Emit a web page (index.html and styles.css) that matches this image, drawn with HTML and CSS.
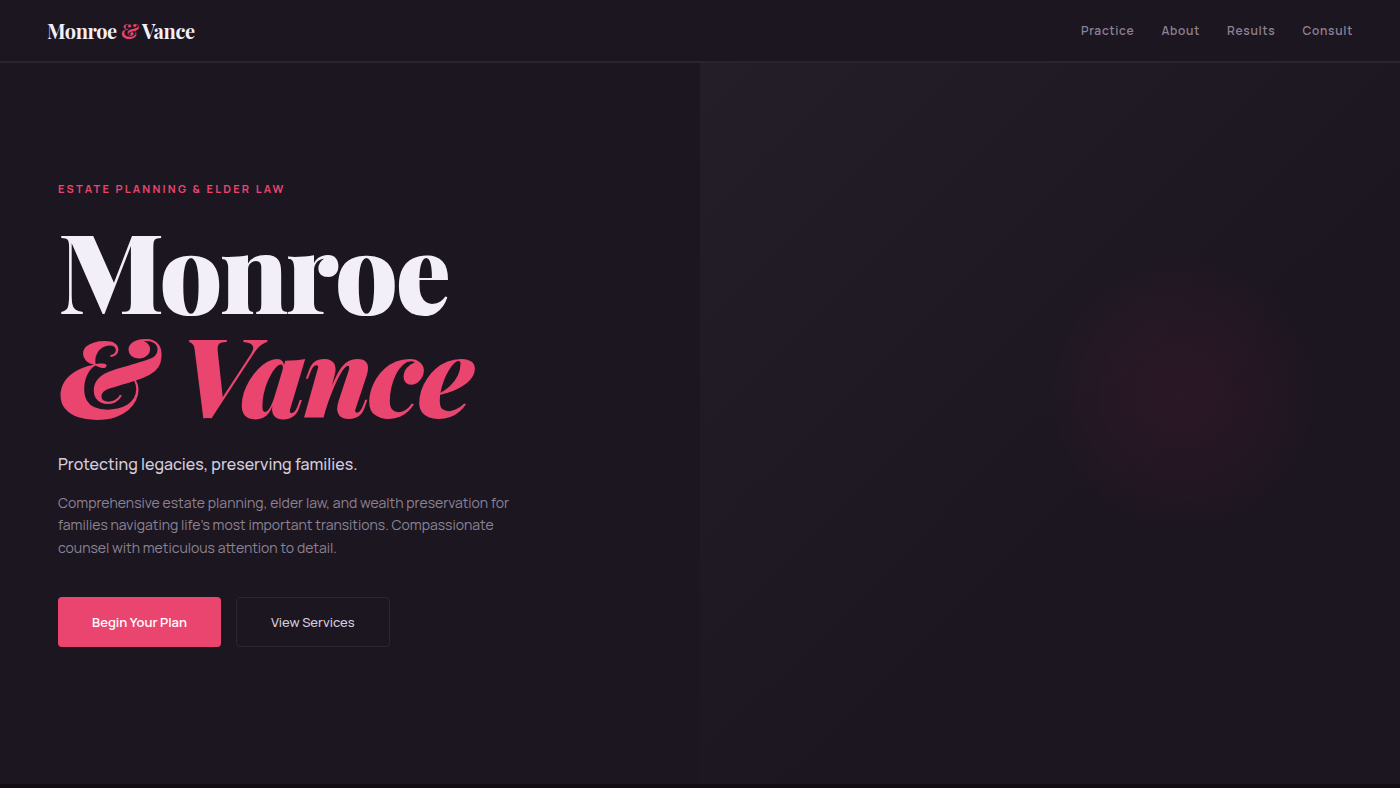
FILE: index.html
```html
<!DOCTYPE html>
<html lang="en">
  <head>
    <meta charset="UTF-8">
    <meta name="viewport" content="width=device-width, initial-scale=1.0">
    <title>Monroe &amp; Vance</title>
    <link rel="stylesheet" href="styles.css">
  </head>
  <body>
    <nav class="navbar">
      <a href="#" class="logo">Monroe <span>&amp;</span> Vance</a>
      <div class="nav-links">
        <a href="#practice">Practice</a>
        <a href="#about">About</a>
        <a href="#results">Results</a>
        <a href="#consult">Consult</a>
      </div>
    </nav>

    <main class="hero">
      <div class="hero-content">
        <p class="eyebrow">Estate Planning &amp; Elder Law</p>
        <h1>Monroe <em>&amp; Vance</em></h1>
        <p class="tagline">Protecting legacies, preserving families.</p>
        <p class="description">Comprehensive estate planning, elder law, and wealth preservation for families navigating life’s most important transitions. Compassionate counsel with meticulous attention to detail.</p>
        <div class="actions">
          <button type="button" class="btn btn-primary">Begin Your Plan</button>
          <button type="button" class="btn btn-outline">View Services</button>
        </div>
      </div>
      <div class="hero-visual"></div>
    </main>
  </body>
</html>
```

FILE: styles.css
```css
* {
  box-sizing: border-box;
}

body {
  display: flex;
  flex-direction: column;
  min-height: 100vh;
  margin: 0;
  font-family: Manrope, Inter, sans-serif;
  color: #f3eff9;
  background-color: #1c1620;
  border-bottom: 4px solid #120c14;
}

/* Navigation */
.navbar {
  display: flex;
  align-items: center;
  justify-content: space-between;
  padding: 18px 47px;
  border-bottom: 2px solid #2a242e;
}

.logo {
  font-family: "Playfair Display", "Liberation Serif", serif;
  font-size: 20px;
  font-weight: 700;
  line-height: 25px;
  letter-spacing: -0.02em;
  color: #f3eff9;
  text-decoration: none;
}

.logo span {
  color: #ea456f;
}

.nav-links {
  display: flex;
  gap: 27px;
}

.nav-links a {
  font-size: 12px;
  font-weight: 600;
  line-height: 24px;
  letter-spacing: 0.06em;
  color: #8c8294;
  text-decoration: none;
}

/* Hero */
.hero {
  display: grid;
  grid-template-columns: 1fr 1fr;
  flex: 1;
}

.hero-content {
  display: flex;
  flex-direction: column;
  justify-content: center;
  padding: 48px 58px 69px;
}

.eyebrow {
  margin: 0 0 18px;
  font-size: 11px;
  font-weight: 700;
  line-height: 20px;
  letter-spacing: 0.2em;
  text-transform: uppercase;
  color: #ea456f;
}

h1 {
  margin: 0 0 27px;
  font-family: "Playfair Display", "Liberation Serif", serif;
  font-size: 110px;
  font-weight: 900;
  line-height: 104px;
  letter-spacing: -0.025em;
}

h1 em {
  display: block;
  font-family: "Playfair Display Black", "Playfair Display", "Liberation Serif", serif;
  font-style: oblique 14deg;
  color: #ea456f;
}

.tagline {
  margin: 0 0 16px;
  font-size: 16px;
  font-weight: 500;
  line-height: 24px;
  color: #d4ccdc;
}

.description {
  max-width: 464px;
  margin: 0 0 38px;
  font-size: 14px;
  line-height: 1.6;
  color: #8c8294;
}

.actions {
  display: flex;
  gap: 15px;
}

.btn {
  height: 50px;
  padding: 0 34px;
  font-family: inherit;
  font-size: 13px;
  border-radius: 4px;
  cursor: pointer;
}

.btn-primary {
  font-weight: 600;
  color: #fff;
  background-color: #ea456f;
  border: none;
}

.btn-outline {
  font-weight: 500;
  color: #d4ccdc;
  background-color: transparent;
  border: 1px solid #2c2631;
}

.hero-visual {
  background:
    radial-gradient(circle at 69% 46%, rgba(190, 30, 100, 0.09) 0, rgba(190, 30, 100, 0.05) 80px, transparent 140px),
    linear-gradient(135deg, #241e28 0%, #1c1620 60%);
}
```
